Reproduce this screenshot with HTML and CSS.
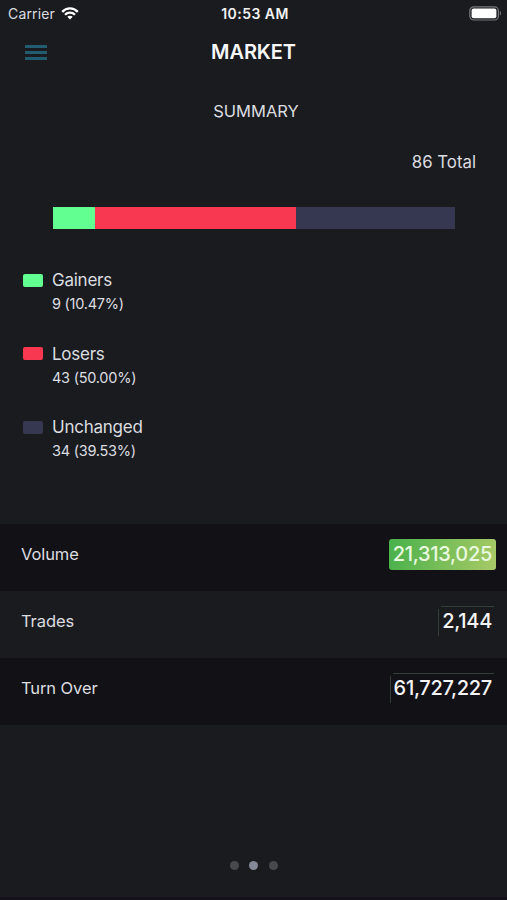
FILE: index.html
```
<!DOCTYPE html>
<html lang="en">
<head>
    <meta charset="UTF-8">
    <meta name="viewport" content="width=device-width, initial-scale=1.0">
    <title>Market</title>
    <link rel="stylesheet" href="styles.css">
</head>
<body>
    <div class="screen">
        <div class="status-bar">
            <div class="carrier">
                <span>Carrier</span>
                <svg class="wifi" width="18" height="13" viewBox="0 0 18 13" fill="none" stroke="#fff" stroke-width="2.3">
                    <path d="M1.2 4.9 C5.5 0.3 12.5 0.3 16.8 4.9"/>
                    <path d="M4 7.8 C6.8 5 11.2 5 14 7.8"/>
                    <path d="M9 12.4 L6.3 9.7 C7.8 8.4 10.2 8.4 11.7 9.7 Z" fill="#fff" stroke="none"/>
                </svg>
            </div>
            <span class="time">10:53 AM</span>
            <svg class="battery" width="33" height="15" viewBox="0 0 33 15">
                <rect x="0.8" y="0.8" width="28.6" height="13.2" rx="4" fill="none" stroke="#77787c" stroke-width="1.2"/>
                <rect x="2.6" y="2.5" width="24.8" height="9.8" rx="2" fill="#fff"/>
                <path d="M30.9 5 C32.4 5.6 32.4 9 30.9 9.6 Z" fill="#77787c"/>
            </svg>
        </div>

        <div class="header">
            <div class="menu"><i></i><i></i><i></i></div>
            <h1>MARKET</h1>
        </div>

        <h2>SUMMARY</h2>
        <div class="total">86 Total</div>

        <div class="bar">
            <div class="gainers" style="flex-grow: 10.47"></div>
            <div class="losers" style="flex-grow: 50"></div>
            <div class="unchanged" style="flex-grow: 39.53"></div>
        </div>

        <div class="legend">
            <div class="legend-item">
                <div class="swatch gainers"></div>
                <div>
                    <div class="legend-name">Gainers</div>
                    <div class="legend-value">9 (10.47%)</div>
                </div>
            </div>
            <div class="legend-item">
                <div class="swatch losers"></div>
                <div>
                    <div class="legend-name">Losers</div>
                    <div class="legend-value">43 (50.00%)</div>
                </div>
            </div>
            <div class="legend-item">
                <div class="swatch unchanged"></div>
                <div>
                    <div class="legend-name">Unchanged</div>
                    <div class="legend-value">34 (39.53%)</div>
                </div>
            </div>
        </div>

        <div class="stats">
            <div class="stat">
                <span class="stat-label">Volume</span>
                <span class="stat-value active">21,313,025</span>
            </div>
            <div class="stat">
                <span class="stat-label">Trades</span>
                <span class="stat-value outlined">2,144</span>
            </div>
            <div class="stat">
                <span class="stat-label">Turn Over</span>
                <span class="stat-value outlined">61,727,227</span>
            </div>
        </div>

        <div class="dots">
            <i></i><i class="current"></i><i></i>
        </div>
    </div>
</body>
</html>
```
FILE: styles.css
```
:root {
    --background: #1a1b1f;
    --row-dark: #121116;
    --text: #dcdde0;
    --green: #62ff91;
    --red: #f83850;
    --slate: #353850;
}

* {
    box-sizing: border-box;
}

body {
    margin: 0;
    background: var(--background);
    color: var(--text);
    font-family: Inter, "Liberation Sans", sans-serif;
}

.screen {
    display: flex;
    flex-direction: column;
    height: 900px;
    border-bottom: 3px solid #17111b;
    overflow: hidden;
}

.status-bar {
    display: grid;
    grid-template-columns: 1fr auto 1fr;
    align-items: center;
    height: 27px;
    padding: 0 5px 0 8px;
    font-size: 14px;
}

.carrier {
    display: flex;
    align-items: center;
    gap: 6px;
    letter-spacing: 0.15px;
}

.time {
    color: #f2f2f3;
    font-weight: 600;
    letter-spacing: 0.45px;
}

.battery {
    justify-self: end;
}

.header {
    display: grid;
    grid-template-columns: 1fr auto 1fr;
    align-items: center;
    height: 50px;
    padding: 0 25px;
}

.menu {
    display: flex;
    flex-direction: column;
    gap: 3px;
    width: 22px;
}

.menu i {
    height: 3px;
    background: #235c70;
}

h1 {
    margin: 0;
    color: #f7f7f8;
    font-size: 20px;
    font-weight: 600;
    letter-spacing: -0.1px;
}

h2 {
    margin: 24px 0 0;
    padding-left: 5px;
    font-size: 16.5px;
    font-weight: 400;
    line-height: 20px;
    text-align: center;
}

.total {
    margin: 31px 31px 0 0;
    font-size: 16.8px;
    line-height: 20px;
    text-align: right;
}

.bar {
    display: flex;
    height: 22px;
    margin: 35px 52px 0 53px;
}

.gainers {
    background: var(--green);
}

.losers {
    background: var(--red);
}

.unchanged {
    background: var(--slate);
}

.legend {
    display: flex;
    flex-direction: column;
    gap: 25.3px;
    margin: 39.4px 0 0 22.5px;
}

.legend-item {
    display: flex;
    gap: 9.5px;
    height: 48px;
}

.swatch {
    width: 20px;
    height: 13px;
    margin-top: 5.6px;
    border-radius: 2px;
}

.legend-name {
    font-size: 17px;
    line-height: 24px;
    letter-spacing: -0.25px;
}

.legend-value {
    font-size: 14.5px;
    line-height: 24px;
    letter-spacing: -0.25px;
}

.stats {
    margin-top: 60.6px;
}

.stat {
    display: flex;
    justify-content: space-between;
    height: 67.2px;
    padding: 15px 11px 0 21px;
}

.stat:nth-child(odd) {
    background: var(--row-dark);
}

.stat-label {
    font-size: 16.5px;
    line-height: 31px;
    letter-spacing: -0.1px;
}

.stat-value {
    position: relative;
    height: 31px;
    padding: 0 4px;
    border-radius: 3px;
    color: #f4f4f6;
    font-size: 20px;
    font-weight: 500;
    line-height: 31px;
    letter-spacing: -0.3px;
}

.active {
    background: linear-gradient(100deg, #48b14b, #a8ca66);
    color: #e9f9df;
}

/* hairlines along the top and left of the idle values */
.outlined::before,
.outlined::after {
    content: "";
    position: absolute;
    background: #343f33;
}

.outlined::before {
    top: 0;
    left: 3px;
    right: 2px;
    height: 1px;
}

.outlined::after {
    top: 3px;
    bottom: 1px;
    left: 0;
    width: 1px;
}

.dots {
    display: flex;
    justify-content: center;
    gap: 10.5px;
    margin: auto 0 27px;
}

.dots i {
    width: 9px;
    height: 9px;
    border-radius: 50%;
    background: #47494d;
}

.dots .current {
    background: #858896;
}
```
